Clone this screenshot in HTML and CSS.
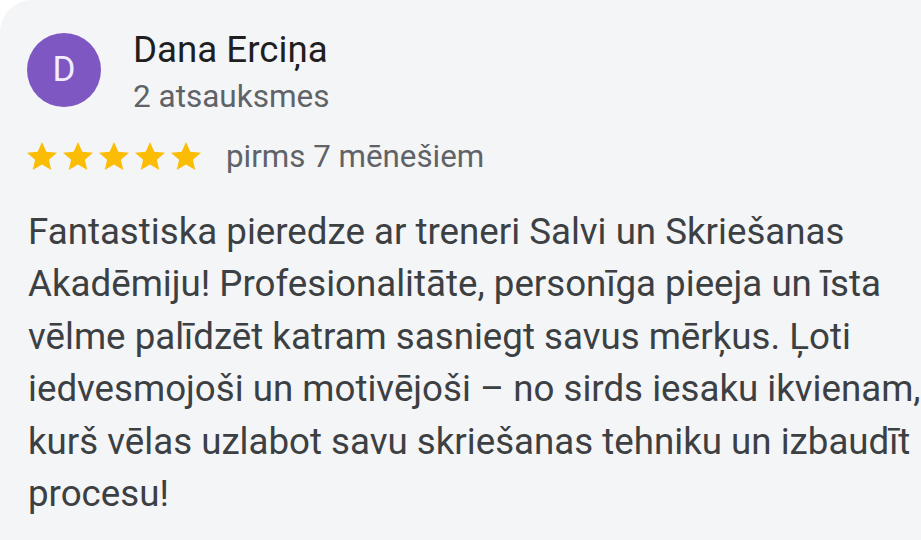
FILE: index.html
```html
<!DOCTYPE html>
<html lang="lv">
<head>
<meta charset="utf-8">
<link rel="stylesheet" href="styles.css">
</head>
<body>
<div class="card">
  <div class="header">
    <div class="avatar">D</div>
    <div class="who">
      <div class="name">Dana Erciņa</div>
      <div class="count">2 atsauksmes</div>
    </div>
  </div>
  <div class="rating">
    <div class="stars">
      <svg class="star" viewBox="2 2.2 20 18.7"><path d="M12 2.2l2.9 6.5 7.1.6-5.4 4.7 1.6 6.9L12 17.3l-6.2 3.6 1.6-6.9L2 9.3l7.1-.6z"/></svg>
      <svg class="star" viewBox="2 2.2 20 18.7"><path d="M12 2.2l2.9 6.5 7.1.6-5.4 4.7 1.6 6.9L12 17.3l-6.2 3.6 1.6-6.9L2 9.3l7.1-.6z"/></svg>
      <svg class="star" viewBox="2 2.2 20 18.7"><path d="M12 2.2l2.9 6.5 7.1.6-5.4 4.7 1.6 6.9L12 17.3l-6.2 3.6 1.6-6.9L2 9.3l7.1-.6z"/></svg>
      <svg class="star" viewBox="2 2.2 20 18.7"><path d="M12 2.2l2.9 6.5 7.1.6-5.4 4.7 1.6 6.9L12 17.3l-6.2 3.6 1.6-6.9L2 9.3l7.1-.6z"/></svg>
      <svg class="star" viewBox="2 2.2 20 18.7"><path d="M12 2.2l2.9 6.5 7.1.6-5.4 4.7 1.6 6.9L12 17.3l-6.2 3.6 1.6-6.9L2 9.3l7.1-.6z"/></svg>
    </div>
    <span class="when">pirms 7 mēnešiem</span>
  </div>
  <p class="text">Fantastiska pieredze ar treneri Salvi un Skriešanas Akadēmiju! Profesionalitāte, personīga pieeja un īsta vēlme palīdzēt katram sasniegt savus mērķus. Ļoti iedvesmojoši un motivējoši – no sirds iesaku ikvienam, kurš vēlas uzlabot savu skriešanas tehniku un izbaudīt procesu!</p>
</div>
</body>
</html>
```
FILE: styles.css
```css
html, body {
  margin: 0;
  padding: 0;
  background: #ffffff;
}
body {
  width: 921px;
  height: 540px;
  overflow: hidden;
  font-family: Roboto, "Noto Sans", sans-serif;
}
.card {
  background: #f4f5f7;
  border-top-left-radius: 32px;
  height: 540px;
  box-sizing: border-box;
  padding: 33px 0 0 28px;
  width: 921px;
  overflow: hidden;
}
.header {
  display: flex;
  align-items: flex-start;
  gap: 32px;
}
.avatar {
  width: 74px;
  height: 74px;
  border-radius: 50%;
  background: #7e57c2;
  color: #f3ecff;
  font-size: 35px;
  line-height: 74px;
  text-align: center;
  flex: none;
  margin-left: -1px;
}
.who {
  margin-top: -1px;
}
.name {
  font-size: 36.7px;
  line-height: 36px;
  color: #1f1f1f;
}
.count {
  font-size: 31.5px;
  line-height: 36px;
  margin-top: 11px;
  color: #5f6368;
}
.rating {
  display: flex;
  align-items: center;
  margin-top: 21px;
  height: 40px;
}
.stars {
  display: flex;
  gap: 6px;
  margin-left: -1px;
}
.star {
  width: 30px;
  height: 28px;
  fill: #fbbc04;
}
.when {
  font-size: 31.3px;
  color: #5f6368;
  margin-left: 25px;
}
.text {
  margin: 30px 0 0 0;
  width: 920px;
  font-size: 36.7px;
  line-height: 52.4px;
  color: #3c4043;
}
```
